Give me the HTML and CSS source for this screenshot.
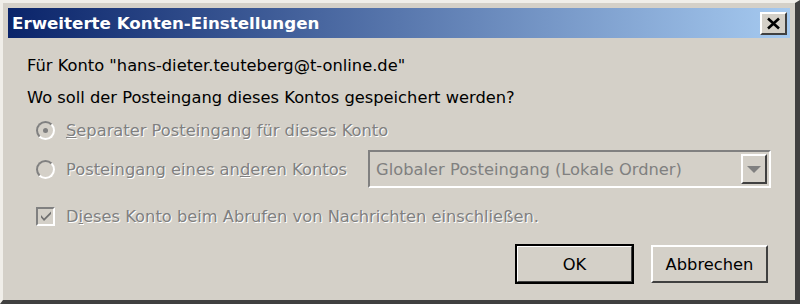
FILE: index.html
```html
<!DOCTYPE html>
<html lang="de">
<head>
    <meta charset="UTF-8">
    <title>Erweiterte Konten-Einstellungen</title>
    <link rel="stylesheet" href="styles.css">
</head>
<body>

    <div class="window">
        <!-- Title bar -->
        <div class="titlebar">
            <span class="title">Erweiterte Konten-Einstellungen</span>
            <button class="close-btn">
                <svg width="15" height="13" viewBox="0 0 15 13"><path d="M2 1.5 L13 11.5 M13 1.5 L2 11.5" stroke="#000" stroke-width="2.6"/></svg>
            </button>
        </div>

        <div class="content">
            <p class="line">Für Konto "hans-dieter.teuteberg@t-online.de"</p>
            <p class="line">Wo soll der Posteingang dieses Kontos gespeichert werden?</p>

            <div class="option">
                <span class="radio checked"></span>
                <span class="disabled"><u>S</u>eparater Posteingang für dieses Konto</span>
            </div>

            <div class="option other">
                <span class="radio"></span>
                <span class="disabled">Posteingang eines an<u>d</u>eren Kontos</span>
                <div class="select">
                    <span class="select-text">Globaler Posteingang (Lokale Ordner)</span>
                    <span class="select-btn"><span class="arrow"></span></span>
                </div>
            </div>

            <div class="option">
                <span class="check">
                    <svg width="14" height="14" viewBox="0 0 14 14"><path d="M2 6 L5 9.5 L12 2.5 L12 5 L5 12 L2 8.5 Z" fill="#707070"/></svg>
                </span>
                <span class="disabled">D<u>i</u>eses Konto beim Abrufen von Nachrichten einschließen.</span>
            </div>

            <div class="buttons">
                <button class="btn default">OK</button>
                <button class="btn">Abbrechen</button>
            </div>
        </div>
    </div>

</body>
</html>
```

FILE: styles.css
```css
/* Classic dialog */
body {
    margin: 0;
    padding: 0;
    background: #d4d0c8;
    font-family: Tahoma, "DejaVu Sans", sans-serif;
}

.window {
    width: 800px;
    height: 304px;
    box-sizing: border-box;
    background: #d4d0c8;
    border-top: 3px solid #f0eee9;
    border-left: 3px solid #f0eee9;
    border-right: 5px solid #404040;
    border-bottom: 4px solid #404040;
    padding: 5px 5px 0 5px;
}

.titlebar {
    height: 30px;
    background: linear-gradient(to right, #0a246a, #a6caf0);
    display: flex;
    align-items: center;
    justify-content: space-between;
    padding: 0 3px 0 4px;
}

.title {
    color: white;
    font-weight: bold;
    font-size: 16.7px;
}

.close-btn {
    width: 27px;
    height: 23px;
    padding: 0;
    background: #d4d0c8;
    border: 2px solid;
    border-color: #fff #404040 #404040 #fff;
    display: flex;
    align-items: center;
    justify-content: center;
}

.content {
    padding: 18px 0 0 19px;
    font-size: 16.3px;
    color: #000;
}

.line {
    margin: 0 0 12px 0;
    line-height: 20px;
}

.option {
    display: flex;
    align-items: center;
    height: 20px;
    margin: 0 0 19px 9px;
}

.option.other {
    margin-bottom: 27px;
}

.disabled {
    color: #808080;
    text-shadow: 1px 1px 0 #fff;
}

.radio {
    width: 19px;
    height: 19px;
    box-sizing: border-box;
    border-radius: 50%;
    border: 2px solid;
    border-color: #808080 #fff #fff #808080;
    background: #d4d0c8;
    margin-right: 11px;
    display: flex;
    align-items: center;
    justify-content: center;
}

.radio.checked::after {
    content: "";
    width: 5px;
    height: 5px;
    border-radius: 50%;
    background: #808080;
}

.check {
    width: 19px;
    height: 19px;
    box-sizing: border-box;
    border: 2px solid;
    border-color: #808080 #fff #fff #808080;
    background: #d4d0c8;
    margin-right: 11px;
    display: flex;
    align-items: center;
    justify-content: center;
}

.select {
    margin-left: 21px;
    width: 403px;
    height: 38px;
    box-sizing: border-box;
    border: 2px solid;
    border-color: #808080 #fff #fff #808080;
    display: flex;
    align-items: center;
    justify-content: space-between;
    padding-left: 6px;
}

.select-text {
    color: #808080;
}

.select-btn {
    width: 26px;
    height: 30px;
    box-sizing: border-box;
    border: 2px solid;
    border-color: #fff #404040 #404040 #fff;
    margin-right: 2px;
    display: flex;
    align-items: center;
    justify-content: center;
}

.arrow {
    width: 0;
    height: 0;
    border-left: 7px solid transparent;
    border-right: 7px solid transparent;
    border-top: 7px solid #808080;
}

.buttons {
    display: flex;
    justify-content: flex-end;
    gap: 18px;
    margin-right: 22px;
    margin-top: 4px;
}

.btn {
    width: 117px;
    height: 38px;
    background: #d4d0c8;
    border: 2px solid;
    border-color: #fff #404040 #404040 #fff;
    font-family: Tahoma, "DejaVu Sans", sans-serif;
    font-size: 16.3px;
    color: #000;
}

.btn.default {
    outline: 2px solid #000;
    outline-offset: -1px;
}
```
